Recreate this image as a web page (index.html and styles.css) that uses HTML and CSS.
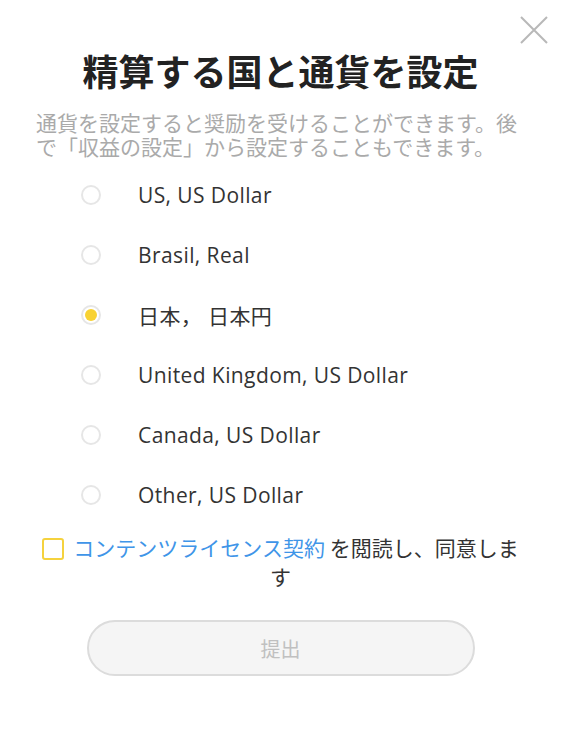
FILE: index.html
```html
<!DOCTYPE html>
<html lang="ja">
<head>
<meta charset="utf-8">
<title>精算する国と通貨を設定</title>
<link rel="stylesheet" href="styles.css">
</head>
<body>
<div class="dialog">
  <button class="close" aria-label="閉じる">
    <svg width="30" height="30" viewBox="0 0 30 30"><path d="M2 2 L28 28 M28 2 L2 28" stroke="#b8b8b8" stroke-width="2" fill="none"/></svg>
  </button>
  <h1 class="title">精算する国と通貨を設定</h1>
  <p class="subtitle">通貨を設定すると奨励を受けることができます。後で「収益の設定」から設定することもできます。</p>
  <ul class="options">
    <li class="option"><span class="radio"></span><span class="label">US, US Dollar</span></li>
    <li class="option"><span class="radio"></span><span class="label">Brasil, Real</span></li>
    <li class="option"><span class="radio checked"></span><span class="label">日本，&nbsp;日本円</span></li>
    <li class="option"><span class="radio"></span><span class="label">United Kingdom, US Dollar</span></li>
    <li class="option"><span class="radio"></span><span class="label">Canada, US Dollar</span></li>
    <li class="option"><span class="radio"></span><span class="label">Other, US Dollar</span></li>
  </ul>
  <p class="agree"><span class="checkbox"></span><a class="link" href="#">コンテンツライセンス契約</a> を閲読し、同意します</p>
  <button class="submit" disabled>提出</button>
</div>
</body>
</html>
```
FILE: styles.css
```css
html, body {
  margin: 0;
  padding: 0;
  background: #fff;
}
body {
  font-family: "Noto Sans CJK JP", "Noto Sans", sans-serif;
  color: #333;
}
.dialog {
  position: relative;
  width: 561px;
  height: 730px;
  box-sizing: border-box;
  padding: 45px 36px 0;
}
.close {
  position: absolute;
  top: 15px;
  right: 12px;
  width: 30px;
  height: 30px;
  padding: 0;
  border: 0;
  background: none;
}
.close svg { display: block; }
.title {
  margin: 0;
  font-size: 36px;
  line-height: 50px;
  font-weight: 700;
  text-align: center;
  color: #222;
}
.subtitle {
  margin: 15px 0 0;
  font-size: 21px;
  line-height: 24px;
  color: #aaa;
}
.options {
  list-style: none;
  margin: 7px 0 0;
  padding: 0 0 0 45px;
}
.option {
  display: flex;
  align-items: center;
  height: 60px;
  gap: 37px;
}
.radio {
  width: 20px;
  height: 20px;
  box-sizing: border-box;
  border: 2px solid #e6e6e6;
  border-radius: 50%;
  display: flex;
  align-items: center;
  justify-content: center;
}
.radio.checked::after {
  content: "";
  width: 12px;
  height: 12px;
  border-radius: 50%;
  background: #f8d232;
}
.label {
  font-family: "Open Sans", "Noto Sans CJK JP", sans-serif;
  font-size: 21px;
  letter-spacing: 0.4px;
  color: #333;
}
.agree {
  margin: 8px 0 0;
  font-size: 21px;
  line-height: 29px;
  text-align: center;
  color: #333;
}
.checkbox {
  display: inline-block;
  width: 22px;
  height: 22px;
  box-sizing: border-box;
  border: 2px solid #f5d23e;
  border-radius: 3px;
  vertical-align: -4px;
  margin-right: 9px;
}
.link {
  color: #3f95e8;
  text-decoration: none;
}
.submit {
  display: block;
  margin: 29px auto 0;
  width: 388px;
  height: 56px;
  border: 2px solid #dcdcdc;
  border-radius: 28px;
  background: #f5f5f5;
  color: #c0c0c0;
  font-family: "Noto Sans CJK JP", sans-serif;
  font-size: 20px;
}
```
